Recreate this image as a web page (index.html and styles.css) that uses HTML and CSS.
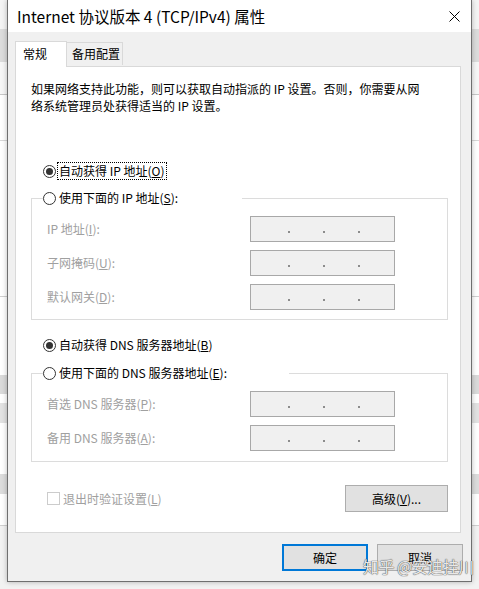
FILE: index.html
```html
<!DOCTYPE html>
<html lang="zh-CN">
<head>
<meta charset="utf-8">
<title>Internet 协议版本 4 (TCP/IPv4) 属性</title>
<link rel="stylesheet" href="styles.css">
</head>
<body>
<div class="dialog">
  <div class="titlebar">
    <span class="title">Internet 协议版本 4 (TCP/IPv4) 属性</span>
    <svg class="close" width="11" height="11" viewBox="0 0 11 11"><path d="M0.5 0.5 L10.5 10.5 M10.5 0.5 L0.5 10.5" stroke="#000" stroke-width="1" fill="none"/></svg>
  </div>
  <div class="client">
    <div class="tabs">
      <div class="tab active">常规</div>
      <div class="tab">备用配置</div>
    </div>
    <div class="panel">
      <p class="desc">如果网络支持此功能，则可以获取自动指派的 IP 设置。否则，你需要从网<br>络系统管理员处获得适当的 IP 设置。</p>

      <div class="opt first"><span class="radio on"></span><span class="focus">自动获得 IP 地址(<u>O</u>)</span></div>

      <fieldset class="group g1">
        <legend class="leg1"><span class="radio"></span>使用下面的 IP 地址(<u>S</u>):</legend>
        <div class="field"><span class="lbl">IP 地址(<u>I</u>):</span><div class="ipbox"><i></i><i></i><i></i></div></div>
        <div class="field"><span class="lbl">子网掩码(<u>U</u>):</span><div class="ipbox"><i></i><i></i><i></i></div></div>
        <div class="field"><span class="lbl">默认网关(<u>D</u>):</span><div class="ipbox"><i></i><i></i><i></i></div></div>
      </fieldset>

      <div class="opt dns"><span class="radio on"></span>自动获得 DNS 服务器地址(<u>B</u>)</div>

      <fieldset class="group g2">
        <legend class="leg2"><span class="radio"></span>使用下面的 DNS 服务器地址(<u>E</u>):</legend>
        <div class="field"><span class="lbl">首选 DNS 服务器(<u>P</u>):</span><div class="ipbox"><i></i><i></i><i></i></div></div>
        <div class="field"><span class="lbl">备用 DNS 服务器(<u>A</u>):</span><div class="ipbox"><i></i><i></i><i></i></div></div>
      </fieldset>

      <div class="bottom">
        <div class="check"><span class="box"></span>退出时验证设置(<u>L</u>)</div>
        <div class="btn adv">高级(<u>V</u>)...</div>
      </div>
    </div>
    <div class="footer">
      <div class="btn ok">确定</div>
      <div class="btn">取消</div>
    </div>
  </div>
</div>
<span class="watermark">知乎 @安迪挂川</span>
</body>
</html>
```

FILE: styles.css
```css
* { box-sizing: border-box; }

html, body {
  margin: 0;
  width: 479px;
  height: 589px;
  overflow: hidden;
}

body {
  position: relative;
  font-family: "Noto Sans CJK SC", "Noto Sans", sans-serif;
  font-size: 12px;
  color: #000;
  background:
    linear-gradient(to bottom,
      #f4f4f4 0 29px,
      #dcdcdc 29px 62px,
      #f7f7f7 62px 94px,
      #c8c8c8 94px 95px,
      #ffffff 95px 140px,
      #d8d8d8 140px 141px,
      #ffffff 141px 296px,
      #d0d0d0 296px 297px,
      #ffffff 297px 375px,
      #dadada 375px 394px,
      #ffffff 394px 403px,
      #e2e2e2 403px 423px,
      #ffffff 423px 474px,
      #dcdcdc 474px 494px,
      #ffffff 494px 525px,
      #d0d0d0 525px 526px,
      #f2f2f2 526px 589px);
}

.dialog {
  position: absolute;
  left: 7px;
  top: 0;
  width: 465px;
  height: 582px;
  background: #f0f0f0;
  border: 1px solid #6f6f6f;
  border-top: none;
  box-shadow: 0 0 5px rgba(0, 0, 0, 0.28);
  display: flex;
  flex-direction: column;
}

.titlebar {
  height: 32px;
  flex-shrink: 0;
  background: #fff;
  display: flex;
  align-items: center;
  justify-content: space-between;
  padding: 0 11px 0 9px;
}

.title {
  font-size: 15.5px;
  line-height: 20px;
  color: #000;
}

.close { display: block; }

.client {
  padding: 9px 0 0 7px;
  display: flex;
  flex-direction: column;
}

.tabs {
  display: flex;
  align-items: flex-end;
  height: 25px;
  position: relative;
  z-index: 1;
}

.tab {
  height: 23px;
  border: 1px solid #d9d9d9;
  border-bottom: none;
  background: #f0f0f0;
  display: flex;
  align-items: center;
  padding: 0 0 0 5px;
  width: 57px;
  margin-left: -1px;
  margin-bottom: 1px;
  line-height: 16px;
}

.tab.active {
  height: 26px;
  width: 52px;
  margin-left: 0;
  margin-bottom: -1px;
  background: #fff;
  padding-left: 7px;
  padding-bottom: 1px;
}

.panel {
  width: 446px;
  height: 467px;
  background: #fff;
  border: 1px solid #d9d9d9;
  padding: 13px 14px 0 15px;
}

.desc {
  margin: 0;
  line-height: 17px;
  white-space: nowrap;
}

.opt {
  display: flex;
  align-items: center;
  height: 18px;
  margin-left: 12px;
  line-height: 16px;
}

.opt.first { margin-top: 48px; }
.opt.dns { margin-top: 16px; }

.radio {
  width: 13px;
  height: 13px;
  border: 1px solid #333;
  border-radius: 50%;
  margin-right: 3px;
  display: inline-flex;
  align-items: center;
  justify-content: center;
  flex-shrink: 0;
  background: #fff;
}

.radio.on::after {
  content: "";
  width: 7px;
  height: 7px;
  border-radius: 50%;
  background: #333;
}

.focus {
  border: 1px dotted #000;
  padding: 0 1px;
  margin-left: -2px;
  height: 18px;
  display: inline-flex;
  align-items: center;
}

.group {
  margin: 9px 0 0 0;
  padding: 0 9px 9px 11px;
  border: 1px solid #dcdcdc;
  width: 417px;
  min-width: 0;
}

.g2 { margin-top: 10px; padding-bottom: 10px; }

.group legend {
  padding: 0;
  margin: 0;
  height: 18px;
  display: flex;
  align-items: center;
  line-height: 16px;
  background: #fff;
}

.leg1 { width: 199px; }
.leg2 { width: 246px; }

.field {
  display: flex;
  align-items: center;
  height: 26px;
  margin-top: 8px;
  padding-left: 4px;
}

.field:first-of-type { margin-top: 9px; }

.lbl {
  width: 203px;
  color: #a0a0a0;
  line-height: 16px;
}

.ipbox {
  width: 145px;
  height: 26px;
  border: 1px solid #a8a8a8;
  background: #f0f0f0;
  display: flex;
  align-items: center;
  padding-left: 37px;
  gap: 33px;
}

.ipbox i {
  display: block;
  width: 2px;
  height: 2px;
  background: #8c8c8c;
  margin-top: 5px;
}

.bottom {
  margin-top: 23px;
  width: 417px;
  padding-left: 16px;
  display: flex;
  align-items: center;
  justify-content: space-between;
}

.check {
  display: flex;
  align-items: center;
  color: #a0a0a0;
  line-height: 16px;
}

.check .box {
  width: 13px;
  height: 13px;
  border: 1px solid #cccccc;
  background: #fff;
  margin-right: 3px;
}

.btn {
  height: 27px;
  width: 86px;
  border: 1px solid #adadad;
  background: #e1e1e1;
  display: flex;
  align-items: center;
  justify-content: center;
  line-height: 16px;
}

.btn.adv { width: 103px; }

.btn.ok {
  border: 2px solid #0078d7;
}

.footer {
  display: flex;
  justify-content: flex-end;
  gap: 9px;
  padding: 11px 8px 0 0;
}

.watermark {
  position: absolute;
  left: 363px;
  top: 556px;
  font-size: 16px;
  line-height: 20px;
  color: rgba(255, 255, 255, 0.9);
  text-shadow: 0 0 1px #444, 0 0 1px #444;
  letter-spacing: -0.5px;
}
```
